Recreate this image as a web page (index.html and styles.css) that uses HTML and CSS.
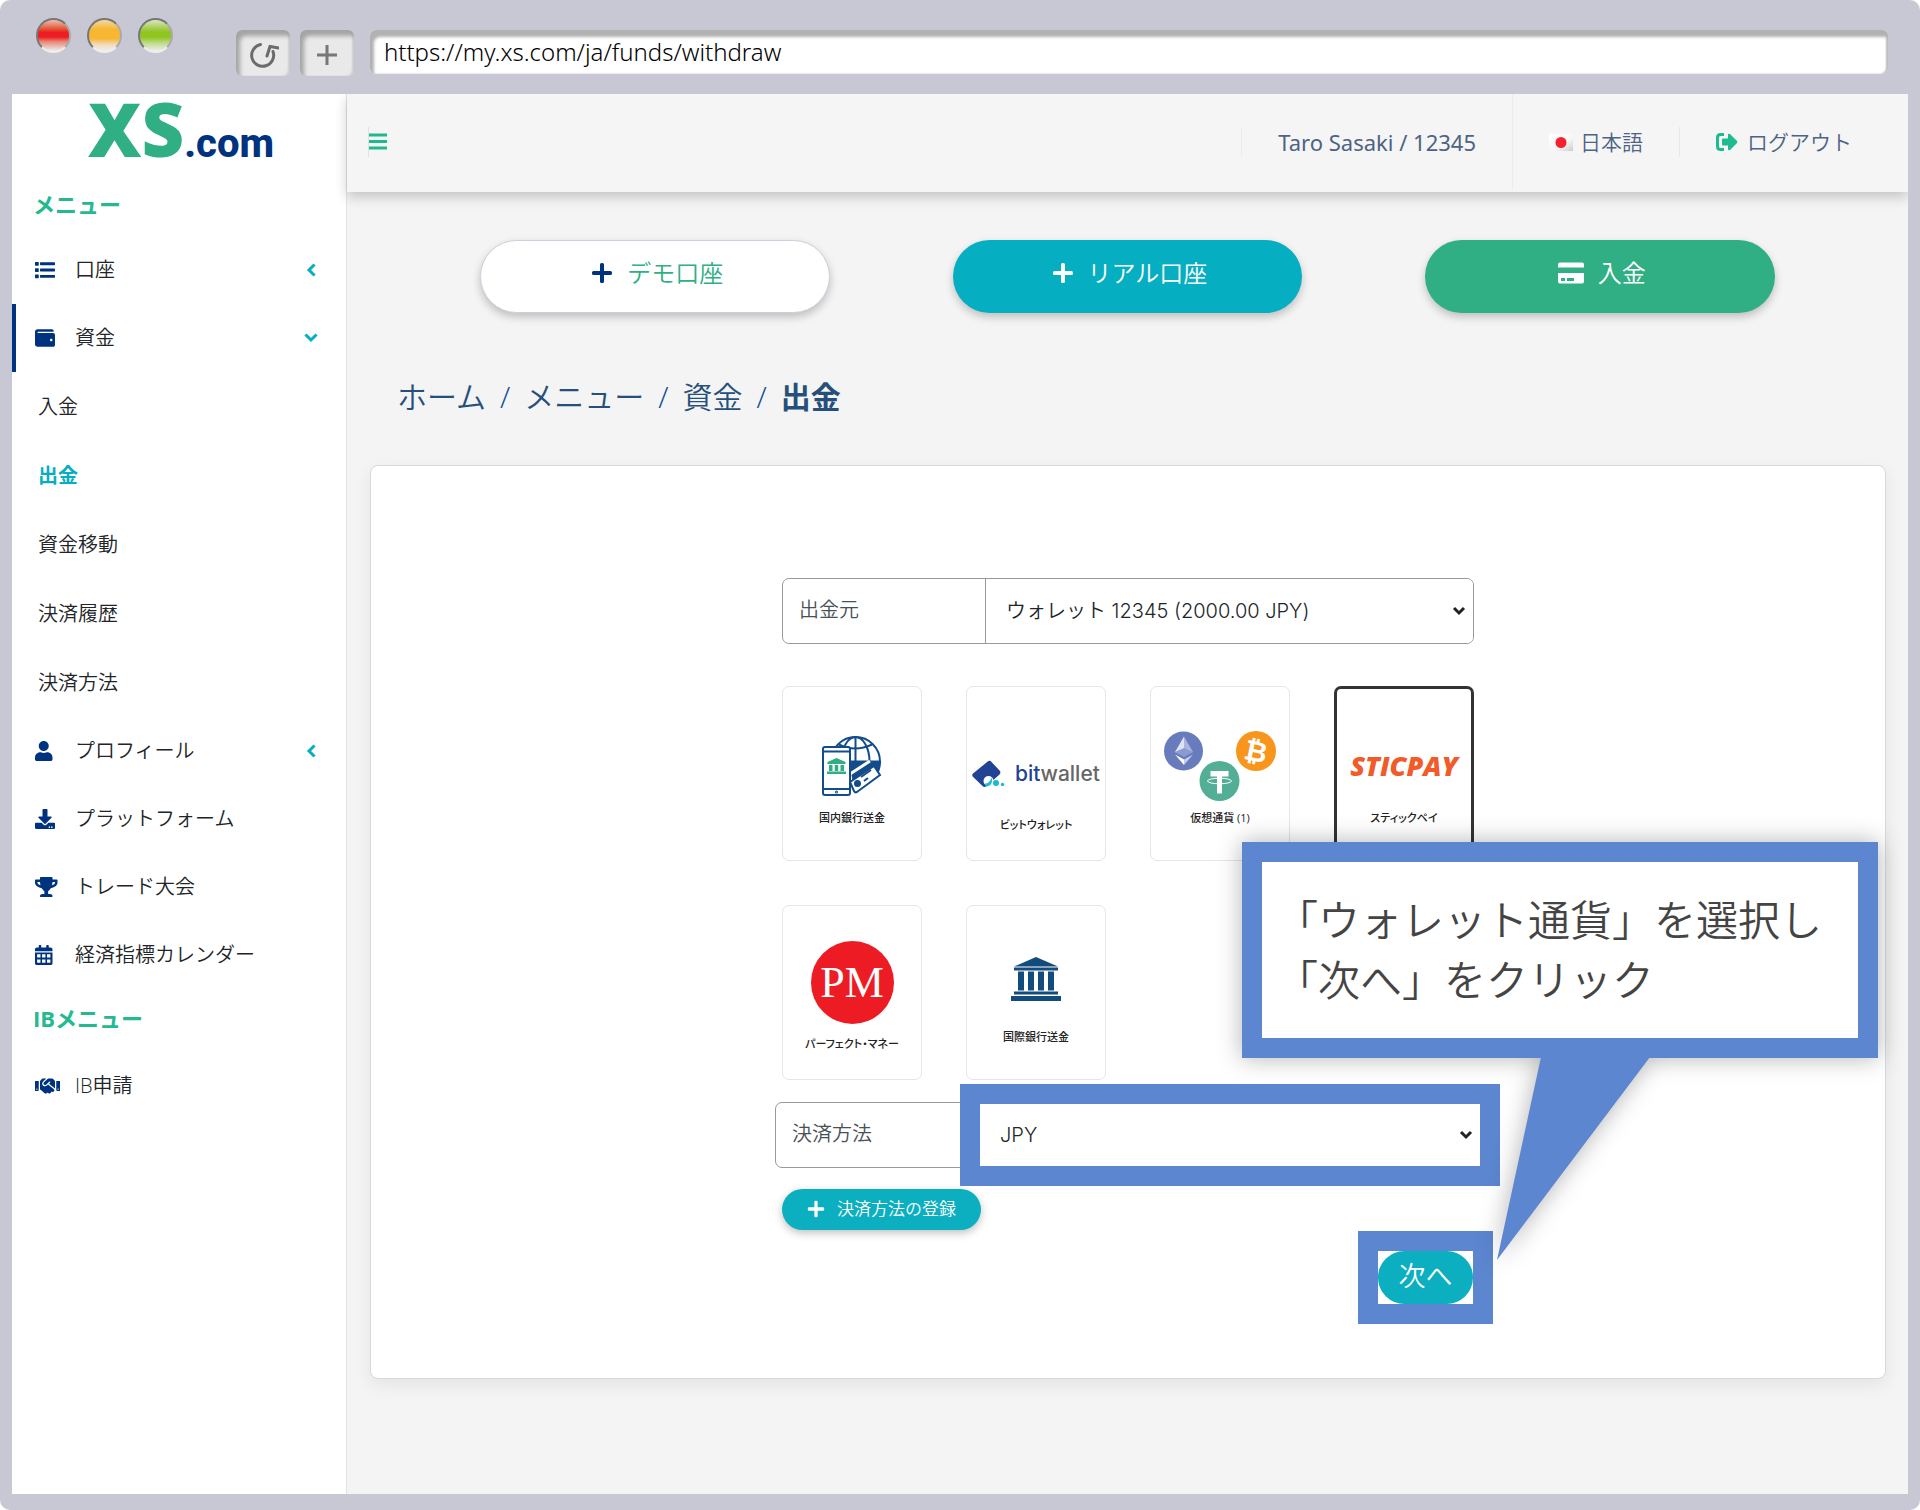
FILE: index.html
```html
<!DOCTYPE html>
<html lang="ja">
<head>
<meta charset="utf-8">
<title>出金 | XS.com</title>
<link rel="stylesheet" href="styles.css">
</head>
<body>
<svg width="0" height="0" class="sprite" aria-hidden="true">
  <symbol id="plus" viewBox="0 0 22 22"><path d="M9 2.500q0-1.500 1.500-1.500h1q1.500 0 1.500 1.500V9h6.500q1.500 0 1.500 1.500v1q0 1.500-1.500 1.500H13v6.500q0 1.500-1.500 1.500h-1Q9 21 9 19.500V13H2.500Q1 13 1 11.500v-1Q1 9 2.500 9H9z" fill="currentColor"/></symbol>
  <symbol id="chevron" viewBox="0 0 14 14"><path d="M9.500 2.500L5 7l4.500 4.500" fill="none" stroke="currentColor" stroke-width="3" stroke-linecap="square"/></symbol>
</svg>

<div class="browser">
  <div class="toolbar">
    <div class="lights"><span class="light red"></span><span class="light amber"></span><span class="light green"></span></div>
    <div class="tools">
      <button class="tool" type="button" aria-label="再読み込み">
        <svg width="32" height="32" viewBox="0 0 32 32" fill="none" stroke="#6b6b6b" stroke-width="3" stroke-linecap="round"><path d="M13.500 5.500A11 11 0 1 0 26 12.500"/><path d="M20 17l3-9.500 9 1.500"/></svg>
      </button>
      <button class="tool" type="button" aria-label="新しいタブ">
        <svg width="22" height="22" viewBox="0 0 22 22" fill="none" stroke="#777" stroke-width="3"><path d="M11 1v20M1 11h20"/></svg>
      </button>
    </div>
    <input class="address" type="text" aria-label="URL" value="https://my.xs.com/ja/funds/withdraw">
  </div>

  <div class="page">
    <aside class="sidebar">
      <a class="brand" href="#"><span class="brand-xs">XS</span><span class="brand-com">.com</span></a>
      <h2 class="menu-title">メニュー</h2>
      <nav class="menu">
        <a class="item" href="#"><svg class="ico" viewBox="0 0 512 512"><path d="M80 368H16a16 16 0 0 0-16 16v64a16 16 0 0 0 16 16h64a16 16 0 0 0 16-16v-64a16 16 0 0 0-16-16zm0-320H16A16 16 0 0 0 0 64v64a16 16 0 0 0 16 16h64a16 16 0 0 0 16-16V64a16 16 0 0 0-16-16zm0 160H16a16 16 0 0 0-16 16v64a16 16 0 0 0 16 16h64a16 16 0 0 0 16-16v-64a16 16 0 0 0-16-16zm416 176H144a16 16 0 0 0-16 16v40a16 16 0 0 0 16 16h352a16 16 0 0 0 16-16v-40a16 16 0 0 0-16-16zm0-324H144a16 16 0 0 0-16 16v40a16 16 0 0 0 16 16h352a16 16 0 0 0 16-16V76a16 16 0 0 0-16-16zm0 160H144a16 16 0 0 0-16 16v40a16 16 0 0 0 16 16h352a16 16 0 0 0 16-16v-40a16 16 0 0 0-16-16z"/></svg>口座<svg class="chev" width="14" height="14"><use href="#chevron"/></svg></a>
        <a class="item open" href="#"><svg class="ico" viewBox="0 0 512 512"><path d="M461.200 128H80c-8.840 0-16-7.160-16-16s7.160-16 16-16h384c8.840 0 16-7.160 16-16 0-26.510-21.490-48-48-48H64C28.650 32 0 60.650 0 96v320c0 35.350 28.650 64 64 64h397.200c28.020 0 50.800-21.530 50.800-48V176c0-26.470-22.780-48-50.800-48zM416 336c-17.670 0-32-14.330-32-32s14.330-32 32-32 32 14.330 32 32-14.330 32-32 32z"/></svg>資金<svg class="chev" width="14" height="14"><use href="#chevron"/></svg></a>
        <a class="sub" href="#">入金</a>
        <a class="sub current" href="#">出金</a>
        <a class="sub" href="#">資金移動</a>
        <a class="sub" href="#">決済履歴</a>
        <a class="sub" href="#">決済方法</a>
        <a class="item" href="#"><svg class="ico" viewBox="0 0 448 512"><path d="M224 256c70.700 0 128-57.300 128-128S294.700 0 224 0 96 57.300 96 128s57.300 128 128 128zm89.600 32h-16.700c-22.200 10.200-46.900 16-72.900 16s-50.600-5.800-72.900-16h-16.700C60.200 288 0 348.200 0 422.400V464c0 26.500 21.500 48 48 48h352c26.500 0 48-21.500 48-48v-41.600c0-74.200-60.200-134.400-134.400-134.400z"/></svg>プロフィール<svg class="chev" width="14" height="14"><use href="#chevron"/></svg></a>
        <a class="item" href="#"><svg class="ico" viewBox="0 0 512 512"><path d="M216 0h80c13.300 0 24 10.700 24 24v168h87.700c17.800 0 26.700 21.500 14.100 34.100L269.700 378.300c-7.500 7.500-19.800 7.500-27.300 0L90.100 226.100c-12.600-12.600-3.700-34.100 14.100-34.100H192V24c0-13.300 10.700-24 24-24zm296 376v112c0 13.300-10.700 24-24 24H24c-13.300 0-24-10.700-24-24V376c0-13.300 10.700-24 24-24h146.700l49 49c20.100 20.100 52.500 20.100 72.600 0l49-49H488c13.300 0 24 10.700 24 24zm-124 88c0-11-9-20-20-20s-20 9-20 20 9 20 20 20 20-9 20-20zm64 0c0-11-9-20-20-20s-20 9-20 20 9 20 20 20 20-9 20-20z"/></svg>プラットフォーム</a>
        <a class="item" href="#"><svg class="ico" viewBox="0 0 576 512"><path d="M552 64H448V24c0-13.300-10.700-24-24-24H152c-13.300 0-24 10.700-24 24v40H24C10.700 64 0 74.700 0 88v56c0 35.700 22.500 72.400 61.900 100.700 31.500 22.700 69.800 37.100 110 41.700C203.300 338.500 240 360 240 360v72h-48c-35.300 0-64 20.700-64 56v12c0 6.600 5.400 12 12 12h296c6.600 0 12-5.400 12-12v-12c0-35.300-28.700-56-64-56h-48v-72s36.700-21.500 68.100-73.600c40.300-4.600 78.600-19 110-41.700 39.300-28.300 61.900-65 61.900-100.700V88c0-13.300-10.700-24-24-24zM99.300 192.800C74.900 175.200 64 155.600 64 144v-16h64.200c1 32.600 5.800 61.200 12.800 86.200-15.100-5.200-29.200-12.400-41.700-21.400zM512 144c0 16.100-17.700 36.100-35.300 48.800-12.500 9-26.700 16.200-41.800 21.400 7-25 11.800-53.600 12.800-86.200H512v16z"/></svg>トレード大会</a>
        <a class="item" href="#"><svg class="ico" viewBox="0 0 448 512"><path fill-rule="evenodd" d="M0 464c0 26.500 21.500 48 48 48h352c26.500 0 48-21.500 48-48V192H0zM54 236h86v86H54zM181 236h86v86h-86zM308 236h86v86h-86zM54 368h86v86H54zM181 368h86v86h-86zM308 368h86v86h-86zM400 64h-48V16c0-8.800-7.200-16-16-16h-32c-8.800 0-16 7.200-16 16v48H160V16c0-8.800-7.200-16-16-16h-32c-8.800 0-16 7.200-16 16v48H48C21.500 64 0 85.500 0 112v48h448v-48c0-26.500-21.500-48-48-48z"/></svg>経済指標カレンダー</a>
      </nav>
      <h2 class="menu-title second">IBメニュー</h2>
      <nav class="menu">
        <a class="item" href="#"><svg class="ico" viewBox="0 0 640 512"><path d="M434.700 64h-85.900c-8 0-15.700 3-21.600 8.400l-98.300 90c-.1.1-.2.3-.3.4-16.600 15.600-16.300 40.500-2.100 56 12.700 13.900 39.400 17.600 56.100 2.700.1-.1.3-.1.4-.2l79.900-73.200c6.500-5.900 16.700-5.500 22.600 1 6 6.500 5.500 16.600-1 22.600l-26.100 23.900L504 313.800c2.900 2.400 5.500 5 7.900 7.700V128l-54.600-54.600c-5.900-6-14.100-9.400-22.600-9.400zM544 128.200v223.900c0 17.700 14.300 32 32 32h64V128.200h-96zm48 223.900c-8.800 0-16-7.200-16-16s7.200-16 16-16 16 7.200 16 16-7.200 16-16 16zM0 384h64c17.700 0 32-14.300 32-32V128.200H0V384zm48-63.900c8.800 0 16 7.200 16 16s-7.200 16-16 16-16-7.200-16-16c0-8.900 7.200-16 16-16zm435.900 18.600L334.600 217.500l-30 27.500c-29.700 27.100-75.200 24.500-101.700-4.400-26.900-29.400-24.800-74.900 4.400-101.700L289.100 64h-83.800c-8.500 0-16.600 3.400-22.600 9.400L128 128v223.900h18.300l90.500 81.900c27.400 22.300 67.700 18.100 90-9.300l.2-.2 17.900 15.500c15.900 13 39.400 10.500 52.300-5.400l31.400-38.600 5.400 4.400c13.700 11.100 33.900 9.100 45-4.700l9.500-11.700c11.200-13.800 9.100-33.900-4.600-45.100z"/></svg>IB申請</a>
      </nav>
    </aside>

    <div class="main">
      <header class="topbar">
        <button class="burger" type="button" aria-label="メニューを開閉"><svg width="18" height="18" viewBox="0 0 18 18"><path d="M0 2h18M0 8.500h18M0 15h18" stroke="#1fb890" stroke-width="3"/></svg></button>
        <div class="account"><a class="user" href="#">Taro Sasaki / 12345</a></div>
        <a class="lang" href="#">
          <svg width="24" height="17" viewBox="0 0 24 17"><defs><linearGradient id="flag" x1="0" x2="1" y1="0" y2="1"><stop offset="0" stop-color="#fff"/><stop offset=".6" stop-color="#f6f6f6"/><stop offset="1" stop-color="#ccc"/></linearGradient></defs><rect width="24" height="17" fill="url(#flag)"/><circle cx="12" cy="8.500" r="5.500" fill="#f5222d"/></svg>日本語</a>
        <a class="logout" href="#">
          <svg width="22" height="18" viewBox="0 0 22 18"><path d="M8 1.500H4.500Q1.500 1.500 1.500 4.500v9q0 3 3 3H8" fill="none" stroke="#1fbb90" stroke-width="3"/><path d="M6 6.500q0-1 1-1h5V2q0-2 2-1l7 7q.8 1 0 2l-7 7q-2 1-2-1v-3.500H7q-1 0-1-1z" fill="#1fbb90"/></svg>ログアウト</a>
      </header>

      <div class="actions">
        <button class="pill demo" type="button"><svg width="22" height="22"><use href="#plus"/></svg><span>デモ口座</span></button>
        <button class="pill real" type="button"><svg width="22" height="22"><use href="#plus"/></svg><span>リアル口座</span></button>
        <button class="pill deposit" type="button"><svg width="26" height="22" viewBox="0 0 26 22"><path fill="#fff" fill-rule="evenodd" d="M2 0.500h22q2 0 2 2V5.500H0V2.500q0-2 2-2zM0 11h26v8.500q0 2-2 2H2q-2 0-2-2zM3 16v3h4v-3zM9 16v3h7v-3z"/></svg><span>入金</span></button>
      </div>

      <nav class="crumbs" aria-label="パンくず"><a href="#">ホーム</a><span>/</span><a href="#">メニュー</a><span>/</span><a href="#">資金</a><span>/</span><strong>出金</strong></nav>

      <section class="card">
        <form class="form">
          <div class="group source">
            <label for="source">出金元</label>
            <select id="source"><option>ウォレット 12345 (2000.00 JPY)</option></select>
          </div>

          <div class="tiles">
            <button class="tile" type="button">
              <span class="art"><svg width="60" height="60" viewBox="0 0 60 60" fill="none" stroke="#124c8c" stroke-width="2">
                <circle cx="33.500" cy="25.500" r="24.500"/><ellipse cx="33.500" cy="25.500" rx="14" ry="24.500"/><path d="M33.500 1v34M17 8.500q16 8 33 0M9 25.500h49"/>
                <path d="M28 26h30l-3 14-22 12z" fill="#124c8c"/>
                <path d="M28 38L48 25" stroke="#fff" stroke-width="3"/>
                <path d="M28 46L52 30l6 9-23 17q-2 1-3-1z" fill="#fff"/><circle cx="35.500" cy="47.500" r="2.500" fill="#124c8c"/><path d="M39 41l10-7M42 45l4-3"/>
                <rect x="1" y="11" width="27" height="48" rx="2" fill="#fff"/><path d="M1 15.500h27M1 53h27"/><circle cx="14.500" cy="56" r=".5"/>
                <path d="M14.500 22l9 4v2h-18v-2zM7 29h3.500v6H7zM12.700 29h3.500v6h-3.500zM18.500 29H22v6h-3.500zM5 35.500h19V38H5z" fill="#2fae84" stroke="none"/></svg></span>
              <span class="name">国内銀行送金</span>
            </button>
            <button class="tile tall" type="button">
              <span class="art bit"><svg width="33" height="28" viewBox="0 0 33 28"><path d="M1 13.500L16 1.300q2-1.300 3.500.7l8.500 9q1 2-.5 3.500L14 26.500q-2 1-3.500-.5L.7 16.500q-1-1.500.3-3z" fill="#224394"/><circle cx="16.500" cy="21" r="5" fill="#fff"/><path d="M13 23.500q4 .5 7-6 1 8-5 9-2-.5-2-3z" fill="#18b9d3"/><circle cx="24" cy="23" r="3" fill="#18b9d3"/><circle cx="30.500" cy="24.500" r="1.700" fill="#18b9d3"/></svg><span class="bitname"><b>bit</b>wallet</span></span>
              <span class="name">ビットウォレット</span>
            </button>
            <button class="tile" type="button">
              <span class="art"><svg width="114" height="70" viewBox="0 0 112 70">
                <circle cx="19.500" cy="20" r="19.500" fill="#687bbd"/><path d="M20 5.500v19.500l-9-4z" fill="#dfe4f5"/><path d="M20 5.500v19.500l9-4z" fill="#a9b5dd"/><path d="M11 21l9-4 9 4-9 5z" fill="#8b9ad0"/><path d="M11 23.500l9 5V34z" fill="#fff"/><path d="M29 23.500l-9 5V34z" fill="#c4cdea"/>
                <circle cx="92" cy="20" r="20" fill="#f8951d"/><text x="92" y="30" text-anchor="middle" class="coin" transform="rotate(12 92 20)">₿</text>
                <circle cx="55.500" cy="50" r="20" fill="#52ae94"/><path d="M46.500 40h18v5.500H58v17h-5v-17h-6.500z" fill="#fff"/><ellipse cx="55.500" cy="50" rx="12" ry="2.800" fill="none" stroke="#fff" stroke-width="1"/></svg></span>
              <span class="name">仮想通貨 (1)</span>
            </button>
            <button class="tile selected" type="button">
              <span class="art"><span class="sticpay">STICPAY</span></span>
              <span class="name">スティックペイ</span>
            </button>
            <button class="tile tall" type="button">
              <span class="art raised"><span class="pm">PM</span></span>
              <span class="name">パーフェクト・マネー</span>
            </button>
            <button class="tile" type="button">
              <span class="art raised"><svg width="50" height="44" viewBox="0 0 50 44"><path d="M25 0l22 9.500H3zM3 10.500h44v3H3zM7 14.500h6v19H7zM17 14.500h6v19h-6zM27 14.500h6v19h-6zM37 14.500h6v19h-6zM3 34.500h44v3H3zM0 39h50v5H0z" fill="#124c7c"/></svg></span>
              <span class="name">国際銀行送金</span>
            </button>
          </div>

          <div class="group method">
            <label for="method">決済方法</label>
            <span class="marked"><select id="method"><option>JPY</option></select></span>
          </div>

          <button class="register" type="button"><svg width="18" height="18"><use href="#plus"/></svg>決済方法の登録</button>

          <div class="submit"><span class="marked"><button class="next" type="submit">次へ</button></span></div>

          <div class="callout" role="note">
            <p>「ウォレット通貨」を選択し<br>「次へ」をクリック</p>
            <svg class="tail" width="153" height="203" viewBox="0 0 153 203"><path d="M44 0h109L0 203z" fill="#5c86d0"/></svg>
          </div>
        </form>
      </section>
    </div>
  </div>
</div>
</body>
</html>
```
FILE: styles.css
```css
* { box-sizing: border-box; }

:root {
  --navy: #00337f;
  --teal: #06aec1;
  --green: #30af85;
  --mark: #5c86d0;
}

body {
  margin: 0;
  background: #fff;
  color: #212529;
  font: 350 20px/30px "Open Sans", "Noto Sans CJK JP", sans-serif;
}

a { color: inherit; text-decoration: none; }
button, select, input { font: inherit; color: inherit; margin: 0; }
button { border: 0; padding: 0; background: none; }
.sprite { position: absolute; }

/* Browser frame */
.browser {
  display: flex;
  flex-direction: column;
  min-height: 100vh;
  padding: 0 12px 16px;
  border-radius: 10px;
  background: #c8c8d5;
}

.toolbar { display: flex; align-items: flex-start; height: 94px; padding: 0 20px 0 24px; }
.lights { display: flex; gap: 16px; padding-top: 18px; }
.light { width: 35px; height: 35px; border: 2px solid; border-color: #777 #aaa #eee #777; border-radius: 50%; }
.red { background: linear-gradient(#eac0b4, #e5502e 30%, #ee1c24 40%, #ee1c24 55%, #e58a75 70%, #eee); }
.amber { background: linear-gradient(#f3d9a5, #f7b733 30%, #f7b733 60%, #f3dcc0 80%, #eee); }
.green { background: linear-gradient(#d9e8bd, #9fca45 30%, #90c520 40%, #90c520 55%, #c0dc8c 75%, #eee); }
.tools { display: flex; gap: 10px; padding: 30px 16px 0 63px; }
.tool {
  display: grid;
  place-items: center;
  width: 54px;
  height: 46px;
  padding-top: 4px;
  border-radius: 6px;
  background: #e9e9e9;
  box-shadow: inset 4px 6px 4px #a4a4a4, inset -2px 0 2px #ccc;
}
.address {
  flex: 1;
  height: 44px;
  margin-top: 30px;
  padding: 0 14px;
  border: 0;
  border-radius: 6px;
  background: #fff;
  box-shadow: inset 4px 7px 3px #b2b2b2, inset -2px 0 2px #bbb;
  color: #000;
  font: 350 24px/44px "Noto Sans", sans-serif;
}

.page { display: grid; grid-template-columns: 335px 1fr; flex: 1; background: #f4f4f4; }

/* Sidebar */
.sidebar { background: #fff; border-right: 1px solid #e3e3e6; }
.brand { display: flex; align-items: baseline; height: 88px; padding-left: 76px; }
.brand-xs { color: var(--green); font-weight: 800; font-size: 74px; line-height: 70px; }
.brand-com { color: var(--navy); font: 800 40px/70px Roboto, sans-serif; }
.menu-title { margin: 0 0 10px; padding-left: 21px; color: #25b98f; font-size: 22px; line-height: 44px; font-weight: 700; }
.second { margin: 7px 0 12px; }
.item {
  display: grid;
  grid-template-columns: 40px 1fr 14px;
  align-items: center;
  height: 68px;
  padding: 0 28px 0 19px;
  border-left: 4px solid transparent;
}
.item.open { border-left-color: var(--navy); }
.ico { height: 20px; fill: var(--navy); margin-right: auto; }
.chev { color: var(--teal); }
.open .chev { transform: rotate(-90deg); }
.sub { display: flex; align-items: center; height: 69px; padding-left: 26px; }
.current { color: var(--teal); font-weight: 700; }

/* Header */
.main { min-width: 0; }
.topbar {
  display: flex;
  align-items: center;
  height: 98px;
  padding: 0 56px 2px 21px;
  background: #f5f5f5;
  box-shadow: 0 5px 12px rgba(0, 0, 0, .2);
  clip-path: inset(0 0 -24px -12px);
  color: #4d6384;
  font-size: 21px;
}
.burger { display: flex; align-items: center; height: 30px; border-left: 1px solid #e2e2e2; }
.account { display: flex; align-items: center; align-self: stretch; margin-left: auto; border-right: 1px solid #ececec; }
.user { padding: 0 36px; border-left: 1px solid #ececec; font: 400 22px/30px "Noto Sans", sans-serif; }
.lang { display: flex; align-items: center; gap: 7px; padding: 0 36px; border-right: 1px solid #e8e8e8; }
.logout { display: flex; align-items: center; gap: 9px; padding-left: 36px; }

/* Quick actions */
.actions { display: grid; grid-template-columns: repeat(3, 1fr); justify-items: center; padding: 48px 72px 0; }
.pill {
  display: flex;
  align-items: center;
  justify-content: center;
  gap: 14px;
  width: 74%;
  height: 73px;
  padding: 0 0 8px 4px;
  border-radius: 37px;
  box-shadow: 0 4px 8px rgba(0, 0, 0, .22);
  color: #fff;
  font-size: 24px;
}
.demo { border: 1px solid #ccd0dc; background: #fff; }
.demo svg { color: var(--navy); }
.demo span { color: var(--green); }
.real { background: var(--teal); }
.deposit { background: var(--green); }

.crumbs { display: flex; gap: 14px; padding: 62px 50px 0; color: #26507b; font-size: 30px; line-height: 44px; }
.crumbs span { color: #0d4c94; }
.crumbs strong { font-weight: 700; }

/* Withdrawal form */
.card {
  margin: 46px 22px 115px 23px;
  padding: 112px 0 74px;
  border: 1px solid #d6d9e0;
  border-radius: 8px;
  background: #fff;
  box-shadow: 0 6px 18px rgba(0, 0, 0, .07);
}
.form { position: relative; width: 706px; margin: 0 auto; }
.group { display: flex; height: 66px; border: 1px solid #999; border-radius: 7px; color: #495057; }
.group label { padding: 16px 16px 0; }
.group select {
  flex: 1;
  width: 100%;
  padding: 0 20px;
  border: 0;
  border-radius: 0 6px 6px 0;
  appearance: none;
  background: #fff url("data:image/svg+xml,%3Csvg xmlns='http://www.w3.org/2000/svg' width='14' height='10'%3E%3Cpath d='M2 2l5 5 5-5' fill='none' stroke='%23222' stroke-width='3'/%3E%3C/svg%3E") no-repeat right 7px center;
  color: #212529;
  font: 350 20px/30px Inter, "Noto Sans CJK JP", sans-serif;
}
.source { margin: 0 7px; }
.source label { width: 203px; border-right: 1px solid #999; }

.tiles { display: grid; grid-template-columns: repeat(4, 140px); gap: 44px; margin: 42px 7px 22px; }
.tile {
  display: flex;
  flex-direction: column;
  align-items: center;
  height: 175px;
  padding-top: 35px;
  border: 1px solid #e5e5ea;
  border-radius: 7px;
  background: #fff;
}
.selected { padding-top: 33px; border: 3px solid #333; }
.art { display: flex; align-items: center; justify-content: center; height: 88px; }
.tall .art { height: 95px; }
.art.raised { padding-bottom: 12px; }
.name { font-size: 11px; line-height: 16px; font-weight: 500; font-feature-settings: "palt"; white-space: nowrap; color: #222; }
.art.bit { gap: 10px; padding-top: 8px; }
.bitname { color: #666; font: 450 21px/28px Inter, sans-serif; }
.bitname b { color: #224394; font-weight: 500; }
.coin { fill: #fff; font: 700 28px "DejaVu Sans", sans-serif; }
.sticpay { color: #f15a29; font: italic 800 27px/30px "Open Sans", sans-serif; }
.pm { display: grid; place-items: center; flex: none; width: 83px; height: 83px; border-radius: 50%; background: #ed1c24; color: #fff; font: 400 44px/44px "Liberation Serif", serif; }

.method { justify-content: space-between; }
.marked { position: relative; display: flex; background: #fff; outline: 20px solid var(--mark); }
.method .marked { width: 500px; margin: 1px 0; }
.register {
  display: flex;
  align-items: center;
  justify-content: center;
  gap: 12px;
  width: 199px;
  height: 41px;
  margin: 21px 7px;
  padding-bottom: 2px;
  border-radius: 21px;
  background: #0bafc0;
  box-shadow: 0 3px 8px rgba(0, 0, 0, .25);
  color: #fff;
  font-size: 17px;
}
.submit { display: flex; justify-content: flex-end; padding-right: 8px; }
.next { width: 95px; height: 53px; padding-bottom: 4px; border-radius: 27px; background: #0bafc0; color: #fff; font-size: 27px; }

/* Callout over the form */
.callout {
  position: absolute;
  top: 264px;
  left: 467px;
  width: 636px;
  height: 216px;
  padding: 28px 14px;
  border: 20px solid var(--mark);
  background: #fff;
  filter: drop-shadow(0 0 12px rgba(0, 0, 0, .3));
}
.callout p { margin: 0; color: #444; font-size: 42px; line-height: 60px; white-space: nowrap; }
.tail { position: absolute; top: 195px; left: 235px; }
```
